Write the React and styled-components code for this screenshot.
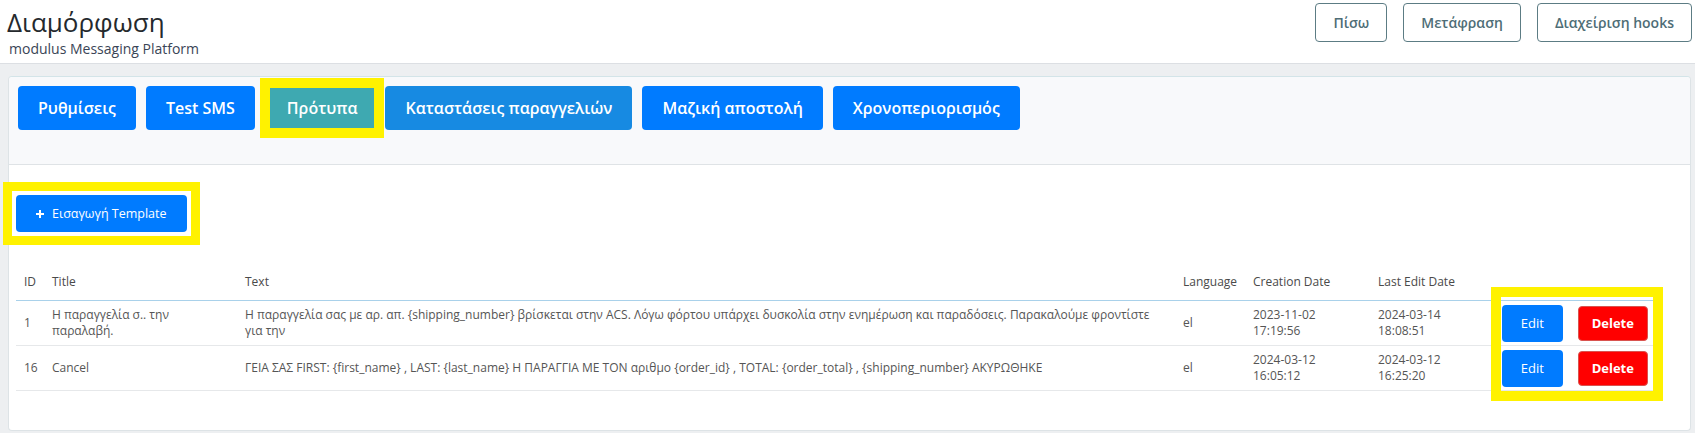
import React from 'react';
import styled, {createGlobalStyle} from 'styled-components';


// Page data
const tabs = [
  {id: 1, title: 'Ρυθμίσεις', color: '#007bff'},
  {id: 2, title: 'Test SMS', color: '#007bff'},
  {id: 3, title: 'Πρότυπα', color: '#3ea9b1', active: true},
  {id: 4, title: 'Καταστάσεις παραγγελιών', color: '#178ae2'},
  {id: 5, title: 'Μαζική αποστολή', color: '#007bff'},
  {id: 6, title: 'Χρονοπεριορισμός', color: '#007bff'}
];

const templates = [
  {
    id: 1,
    title: 'Η παραγγελία σ.. την παραλαβή.',
    text: 'Η παραγγελία σας με αρ. απ. {shipping_number} βρίσκεται στην ACS. Λόγω φόρτου υπάρχει δυσκολία στην ενημέρωση και παραδόσεις. Παρακαλούμε φροντίστε για την',
    language: 'el',
    created: '2023-11-02 17:19:56',
    edited: '2024-03-14 18:08:51'
  },
  {
    id: 16,
    title: 'Cancel',
    text: 'ΓΕΙΑ ΣΑΣ FIRST: {first_name} , LAST: {last_name} Η ΠΑΡΑΓΓΙΑ ΜΕ ΤΟΝ αριθμο {order_id} , TOTAL: {order_total} , {shipping_number} ΑΚΥΡΩΘΗΚΕ',
    language: 'el',
    created: '2024-03-12 16:05:12',
    edited: '2024-03-12 16:25:20'
  }
];

const columns = [
  {key: 'id', label: 'ID', width: 28},
  {key: 'title', label: 'Title', width: 193},
  {key: 'text', label: 'Text', width: 938},
  {key: 'language', label: 'Language', width: 70},
  {key: 'created', label: 'Creation Date', width: 125},
  {key: 'edited', label: 'Last Edit Date', width: 124},
  {key: 'actions', label: '', width: 159}
];


// Bold plus sign used on the insert button
function PlusIcon() {
  return (
    <svg width="8" height="8" viewBox="0 0 8 8" fill="currentColor">
      <path d="M3 0h2v3h3v2H5v3H3V5H0V3h3z"/>
    </svg>
  );
}


export default function App() {
  const tabItems = tabs.map(tab => (
    <Tab key={tab.id} $bg={tab.color} $active={tab.active}>{tab.title}</Tab>
  ));

  const rows = templates.map(t => (
    <tr key={t.id}>
      <Cell>{t.id}</Cell>
      <Cell>{t.title}</Cell>
      <Cell>{t.text}</Cell>
      <Cell>{t.language}</Cell>
      <Cell>{t.created}</Cell>
      <Cell>{t.edited}</Cell>
      <ActionCell>
        <ActionGroup>
          <EditButton>Edit</EditButton>
          <DeleteButton>Delete</DeleteButton>
        </ActionGroup>
      </ActionCell>
    </tr>
  ));

  return (
    <>
      <GlobalStyle/>
      <Header>
        <TitleBlock>
          <Title>Διαμόρφωση</Title>
          <Subtitle>modulus Messaging Platform</Subtitle>
        </TitleBlock>
        <HeaderActions>
          <OutlineButton>Πίσω</OutlineButton>
          <OutlineButton>Μετάφραση</OutlineButton>
          <OutlineButton>Διαχείριση hooks</OutlineButton>
        </HeaderActions>
      </Header>
      <Main>
        <Card>
          <CardHeader>{tabItems}</CardHeader>
          <CardBody>
            <InsertButton>
              <PlusIcon/>
              <span>Εισαγωγή Template</span>
            </InsertButton>
            <TableWrap>
              <Table>
                <colgroup>
                  {columns.map(c => <col key={c.key} style={{width: c.width}}/>)}
                </colgroup>
                <thead>
                  <tr>
                    {columns.map(c => <HeadCell key={c.key}>{c.label}</HeadCell>)}
                  </tr>
                </thead>
                <tbody>{rows}</tbody>
              </Table>
              <Highlight/>
            </TableWrap>
          </CardBody>
        </Card>
      </Main>
    </>
  );
}


// Styling
const GlobalStyle = createGlobalStyle`
  html, body {
    margin: 0;
    padding: 0;
    background: #edeff1;
  }

  body {
    font-family: "Open Sans", "Noto Sans", sans-serif;
  }

  * {
    box-sizing: border-box;
  }
`

const Header = styled.header`
  display: flex;
  justify-content: space-between;
  height: 64px;
  padding: 0 3px 0 7px;
  background: #fff;
  border-bottom: 1px solid #dcdfe3;
`

const TitleBlock = styled.div`
  padding-top: 7px;
`

const Title = styled.h1`
  margin: 0;
  font-size: 26px;
  font-weight: 400;
  line-height: 31px;
  color: #25292d;
`

const Subtitle = styled.div`
  margin: 2px 0 0 2px;
  font-size: 14px;
  line-height: 17px;
  color: #3a4556;
`

const HeaderActions = styled.div`
  display: flex;
  align-items: flex-start;
  gap: 16px;
  padding-top: 3px;
`

const OutlineButton = styled.button`
  height: 39px;
  padding: 0 17px;
  border: 1px solid #5c7c84;
  border-radius: 4px;
  background: #fff;
  color: #4e6d76;
  font-family: inherit;
  font-size: 14px;
  font-weight: 600;
`

const Main = styled.main`
  padding: 12px 4px 4px 8px;
`

const Card = styled.section`
  background: #fff;
  border: 1px solid #dde3e6;
  border-top-color: #d3e4e8;
  border-radius: 4px;
`

const CardHeader = styled.nav`
  display: flex;
  align-items: center;
  gap: 10px;
  padding: 9px 10px 34px 9px;
  background: #f8f9fb;
  border-bottom: 1px solid #dfe3e6;
  border-radius: 4px 4px 0 0;
`

const Tab = styled.button`
  height: ${p => p.$active ? '40px' : '44px'};
  padding: 0 ${p => p.$active ? '17px' : '20px'};
  margin: ${p => p.$active ? '0 1px 0 5px' : '0'};
  border: none;
  border-radius: ${p => p.$active ? '0' : '4px'};
  outline: ${p => p.$active ? '10px solid #fff200' : 'none'};
  background: ${p => p.$bg};
  color: #fff;
  font-family: inherit;
  font-size: 16px;
  font-weight: 600;
`

const CardBody = styled.div`
  padding: 30px 37px 39px 7px;
`

const InsertButton = styled.button`
  position: relative;
  display: flex;
  align-items: center;
  gap: 8px;
  height: 37px;
  padding: 0 20px;
  border: none;
  border-radius: 4px;
  background: #007bff;
  color: #fff;
  font-family: inherit;
  font-size: 12.5px;

  &::after {
    content: '';
    position: absolute;
    inset: -13px;
    border: 9px solid #fff200;
    pointer-events: none;
  }
`

const TableWrap = styled.div`
  position: relative;
  margin-top: 32px;
`

const Table = styled.table`
  width: 100%;
  table-layout: fixed;
  border-collapse: collapse;
  font-size: 12px;
  line-height: 16px;
  color: #555;
`

const HeadCell = styled.th`
  padding: 10px 8px;
  text-align: left;
  font-weight: 400;
  color: #4a4a4a;
  border-bottom: 1px solid #a9d1ea;
`

const Cell = styled.td`
  padding: 6px 8px;
  vertical-align: middle;
  border-bottom: 1px solid #e6e8ea;
`

const ActionCell = styled(Cell)`
  padding: 3px 5px 3px 8px;
`

const ActionGroup = styled.div`
  display: flex;
  align-items: center;
  gap: 15px;
`

const EditButton = styled.button`
  width: 61px;
  height: 37px;
  border: none;
  border-radius: 4px;
  background: #007bff;
  color: #fff;
  font-family: inherit;
  font-size: 13px;
`

const DeleteButton = styled.button`
  width: 71px;
  height: 35px;
  border: 1px solid #d9534f;
  border-radius: 4px;
  background: #ff0000;
  color: #fff;
  font-family: inherit;
  font-size: 13px;
  font-weight: 700;
`

const Highlight = styled.div`
  position: absolute;
  top: 23px;
  right: -10px;
  bottom: -10px;
  width: 172px;
  border: 10px solid #fff200;
  pointer-events: none;
`
